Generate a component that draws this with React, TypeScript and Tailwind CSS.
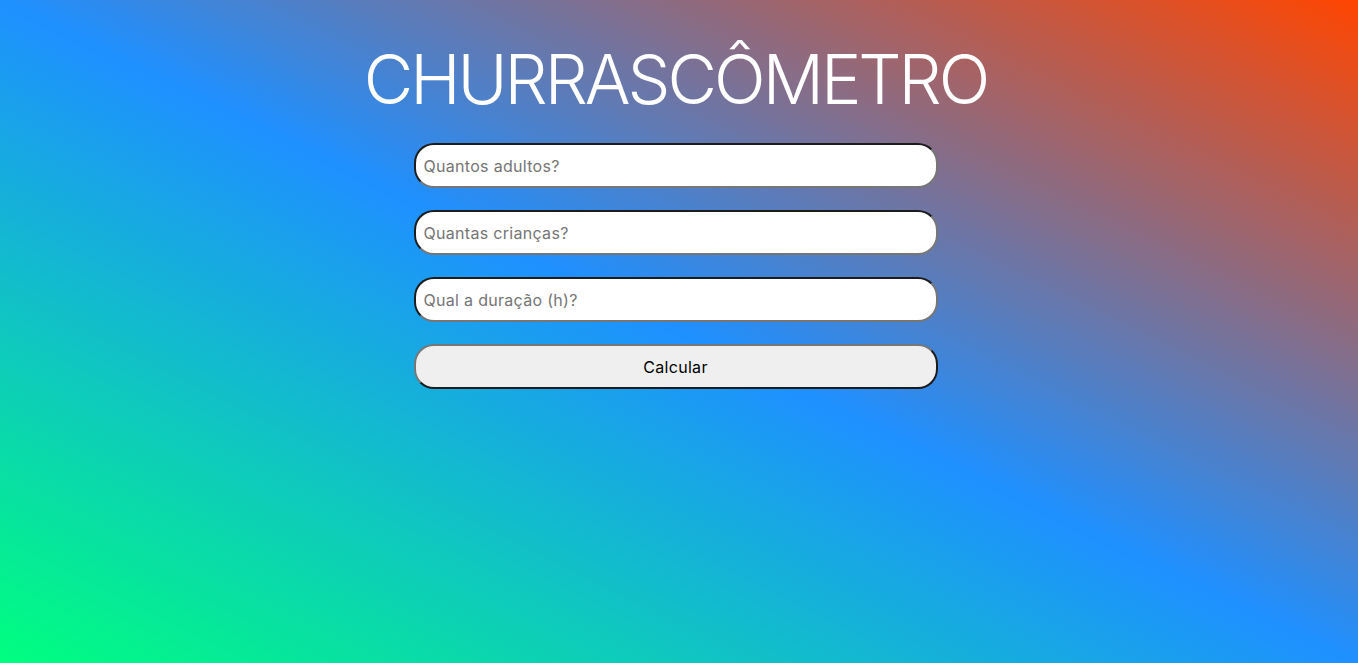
import React from "react";

const fieldClass =
  "h-[45px] w-full rounded-[20px] border-2 border-t-[#1c1c1c] border-l-[#1c1c1c] border-b-[#767676] border-r-[#767676] bg-white px-[8px] text-[16px] tracking-[0.3px] text-black placeholder:text-[#757575] outline-none";

export default function App() {
  return (
    <div className="min-h-screen w-full bg-linear-to-tr/srgb from-[#00ff7f] via-[#1e90ff] to-[#ff4500] font-['Inter','Noto_Sans',sans-serif]">
      <div className="flex flex-col items-center pt-[39px] pr-[7px]">
        <h1 className="text-[68px] leading-[80px] font-light text-white tracking-[-3px]">
          CHURRASCÔMETRO
        </h1>
        <form
          className="mt-[24px] flex flex-col gap-[22px] w-[524px]"
          onSubmit={(e) => e.preventDefault()}
        >
          <input type="number" placeholder="Quantos adultos?" className={fieldClass} />
          <input type="number" placeholder="Quantas crianças?" className={fieldClass} />
          <input type="number" placeholder="Qual a duração (h)?" className={fieldClass} />
          <button
            type="submit"
            className="h-[45px] w-full rounded-[20px] border-2 border-t-[#767676] border-l-[#767676] border-b-[#1c1c1c] border-r-[#1c1c1c] bg-[#efefef] text-[16px] tracking-[0.3px] text-black"
          >
            Calcular
          </button>
        </form>
      </div>
    </div>
  );
}
